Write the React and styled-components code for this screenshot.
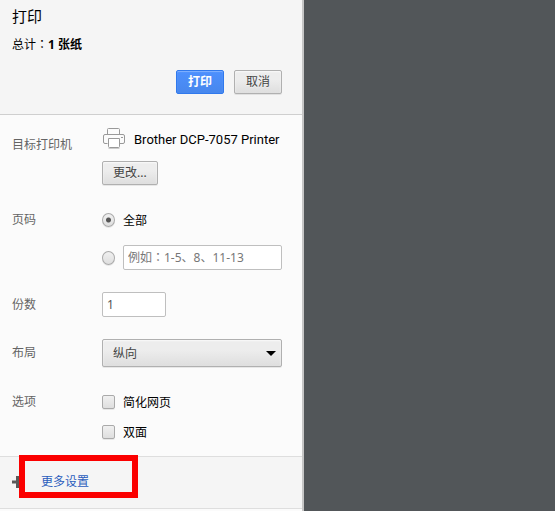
import React, { useState } from "react";
import styled, { createGlobalStyle, css } from "styled-components";

const GlobalStyle = createGlobalStyle`
  * {
    box-sizing: border-box;
  }

  body {
    margin: 0;
    background-color: #525659;
  }

  body, button, input, select {
    font-family: "Noto Sans", "Noto Sans CJK SC", sans-serif;
    font-size: 12px;
  }
`;

const Page = styled.div`
  display: flex;
  min-height: 100vh;
  color: #000000;
`;

const Sidebar = styled.form`
  display: flex;
  flex-direction: column;
  flex: 0 0 304px;
  min-width: 0;
  background-color: #fbfbfb;
  border-right: 2px solid #c6c6c6;
`;

const Preview = styled.main`
  flex: 1;
  background-color: #525659;
`;

const Header = styled.header`
  display: flex;
  flex-direction: column;
  padding: 6px 20px 20px 12px;
  background-color: #f5f5f5;
  border-bottom: 1px solid #cfcfcf;
`;

const Title = styled.h1`
  margin: 0 0 8px;
  font-size: 15px;
  font-weight: 400;
  line-height: 20px;
`;

const Summary = styled.div`
  height: 20px;
  margin-bottom: 16px;
  line-height: 20px;
`;

// The JP face centres the full-width colon in its cell
const Colon = styled.span`
  font-family: "Noto Sans CJK JP", sans-serif;
`;

const Actions = styled.div`
  display: flex;
  justify-content: flex-end;
  gap: 10px;
`;

const raised = css`
  border: 1px solid #b0b0b0;
  border-radius: 2px;
  background-image: linear-gradient(#ededed, #ededed 38%, #dedede);
  box-shadow: 0 1px 0 rgba(0, 0, 0, 0.08),
    inset 0 1px 2px rgba(255, 255, 255, 0.75);
  color: #444444;
`;

const Button = styled.button`
  ${raised}
  min-width: 48px;
  height: 24px;
  padding: 0 10px;
  line-height: 20px;
  text-shadow: 0 1px 0 #f0f0f0;

  ${(props) =>
    props.$primary &&
    css`
      border-color: #3079ed;
      background-image: linear-gradient(#4d90fe, #4787ed);
      box-shadow: inset 0 1px 1px rgba(255, 255, 255, 0.3);
      color: #ffffff;
      font-weight: 700;
      text-shadow: none;
    `}
`;

const Settings = styled.section`
  display: flex;
  flex-direction: column;
  gap: 22px;
  padding: 9px 20px 11px 12px;
`;

const Row = styled.div`
  display: grid;
  grid-template-columns: 90px minmax(0, 1fr);
  align-items: start;
`;

const RowLabel = styled.label`
  color: #646464;
  line-height: ${(props) => props.$height || 25}px;
`;

const Controls = styled.div`
  display: flex;
  flex-direction: column;
  align-items: flex-start;
  gap: ${(props) => props.$gap || 0}px;
`;

const Destination = styled.div`
  display: flex;
  align-items: center;
  gap: 8px;
  height: 30px;
  font-family: Roboto, sans-serif;
  font-size: 13px;
  white-space: nowrap;
`;

const Choice = styled.div`
  display: flex;
  align-items: center;
  gap: 8px;
  width: 100%;
  min-height: ${(props) => props.$height || 26}px;
`;

const Tick = styled.input`
  appearance: none;
  flex: none;
  width: 13px;
  height: 14px;
  margin: 0;
  border: 1px solid #aaaaaa;
  border-radius: ${(props) => (props.type === "radio" ? "50%" : "2px")};
  background-image: linear-gradient(#f0f0f0, #dedede);
  box-shadow: 0 1px 0 rgba(0, 0, 0, 0.08);

  &[type="radio"]:checked {
    background-image: radial-gradient(
      circle,
      #555555 2px,
      transparent 3px
    ), linear-gradient(#f0f0f0, #dedede);
  }

  &[type="checkbox"]:checked {
    background-image: linear-gradient(#666666, #555555);
  }
`;

const TextInput = styled.input`
  width: ${(props) => props.$width || "100%"};
  min-width: 0;
  height: 25px;
  padding: 0 4px;
  border: 1px solid #bfbfbf;
  border-radius: 2px;
  background-color: #ffffff;
  color: #555555;
  font-family: "Noto Sans", "Noto Sans CJK JP", sans-serif;

  &::placeholder {
    color: #777777;
    opacity: 1;
  }
`;

const SelectBox = styled.div`
  display: grid;
  align-items: center;
  width: 100%;

  > * {
    grid-area: 1 / 1;
  }
`;

const Select = styled.select`
  ${raised}
  appearance: none;
  width: 100%;
  height: 28px;
  padding: 0 24px 0 10px;
`;

const Caret = styled.span`
  justify-self: end;
  margin-right: 6px;
  border-top: 5px solid #000000;
  border-right: 5px solid transparent;
  border-left: 5px solid transparent;
  pointer-events: none;
`;

const MoreSettings = styled.section`
  position: relative;
  display: flex;
  align-items: center;
  gap: 18px;
  height: 53px;
  padding: 0 12px 2px;
  background-color: #f5f5f5;
  border-top: 1px solid #dedede;
  border-bottom: 1px solid #dedede;
`;

const MoreLink = styled.a`
  color: #2a5dbd;
  text-decoration: none;
  line-height: 20px;
`;

// Red frame drawn over the link and part of the plus sign
const Highlight = styled.div`
  position: absolute;
  top: -2px;
  left: 19px;
  width: 119px;
  height: 43px;
  border: 6px solid #fb0000;
  pointer-events: none;
`;

const PrinterIcon = () => (
  <svg width="24" height="22" viewBox="0 0 24 22" fill="none" stroke="#999999">
    <path d="M5.500 6.500V1.500Q5.500 .5 6.500 .5H16.500Q17.500 .5 17.500 1.500V6.500" />
    <path d="M5.500 15.500H3Q1.500 15.500 1.500 14V8Q1.500 6.500 3 6.500H21Q22.500 6.500 22.500 8V14Q22.500 15.500 21 15.500H18" />
    <path d="M6.500 10.500H17.500V18.500Q17.500 19.500 16.500 19.500H7.500Q6.500 19.500 6.500 18.500Z" fill="#ffffff" />
    <path d="M6.500 20.500H17.500" stroke="#cccccc" />
    <path d="M19 9.500H21" />
  </svg>
);

const PlusIcon = () => (
  <svg width="11" height="12" viewBox="0 0 11 12" fill="#5a5a5a">
    <path d="M4 0H7V4.500H11V7.500H7V12H4V7.500H0V4.500H4Z" />
  </svg>
);

const App = () => {
  const [range, setRange] = useState("all");
  const [pages, setPages] = useState("");
  const [copies, setCopies] = useState("1");

  return (
    <Page>
      <GlobalStyle />
      <Sidebar onSubmit={(e) => e.preventDefault()}>
        <Header>
          <Title>打印</Title>
          <Summary>
            总计<Colon>：</Colon>
            <b>1 张纸</b>
          </Summary>
          <Actions>
            <Button type="submit" $primary>
              打印
            </Button>
            <Button type="button">取消</Button>
          </Actions>
        </Header>

        <Settings>
          <Row>
            <RowLabel htmlFor="change" $height={42}>
              目标打印机
            </RowLabel>
            <Controls $gap={7}>
              <Destination>
                <PrinterIcon />
                <span>Brother DCP-7057 Printer</span>
              </Destination>
              <Button type="button" id="change">
                更改...
              </Button>
            </Controls>
          </Row>

          <Row>
            <RowLabel as="span">页码</RowLabel>
            <Controls $gap={12}>
              <Choice>
                <Tick
                  type="radio"
                  name="range"
                  id="all"
                  checked={range === "all"}
                  onChange={() => setRange("all")}
                />
                <label htmlFor="all">全部</label>
              </Choice>
              <Choice $height={25}>
                <Tick
                  type="radio"
                  name="range"
                  aria-label="页码"
                  checked={range === "custom"}
                  onChange={() => setRange("custom")}
                />
                <TextInput
                  aria-label="页码"
                  placeholder="例如：1-5、8、11-13"
                  value={pages}
                  onChange={(e) => setPages(e.target.value)}
                />
              </Choice>
            </Controls>
          </Row>

          <Row>
            <RowLabel htmlFor="copies">份数</RowLabel>
            <TextInput
              id="copies"
              $width="64px"
              value={copies}
              onChange={(e) => setCopies(e.target.value)}
            />
          </Row>

          <Row>
            <RowLabel htmlFor="layout" $height={28}>
              布局
            </RowLabel>
            <SelectBox>
              <Select id="layout">
                <option>纵向</option>
              </Select>
              <Caret />
            </SelectBox>
          </Row>

          <Row>
            <RowLabel as="span">选项</RowLabel>
            <Controls $gap={4}>
              <Choice>
                <Tick type="checkbox" id="simplify" />
                <label htmlFor="simplify">简化网页</label>
              </Choice>
              <Choice>
                <Tick type="checkbox" id="duplex" />
                <label htmlFor="duplex">双面</label>
              </Choice>
            </Controls>
          </Row>
        </Settings>

        <MoreSettings>
          <PlusIcon />
          <MoreLink href="#more">更多设置</MoreLink>
          <Highlight />
        </MoreSettings>
      </Sidebar>
      <Preview />
    </Page>
  );
};

export default App;
